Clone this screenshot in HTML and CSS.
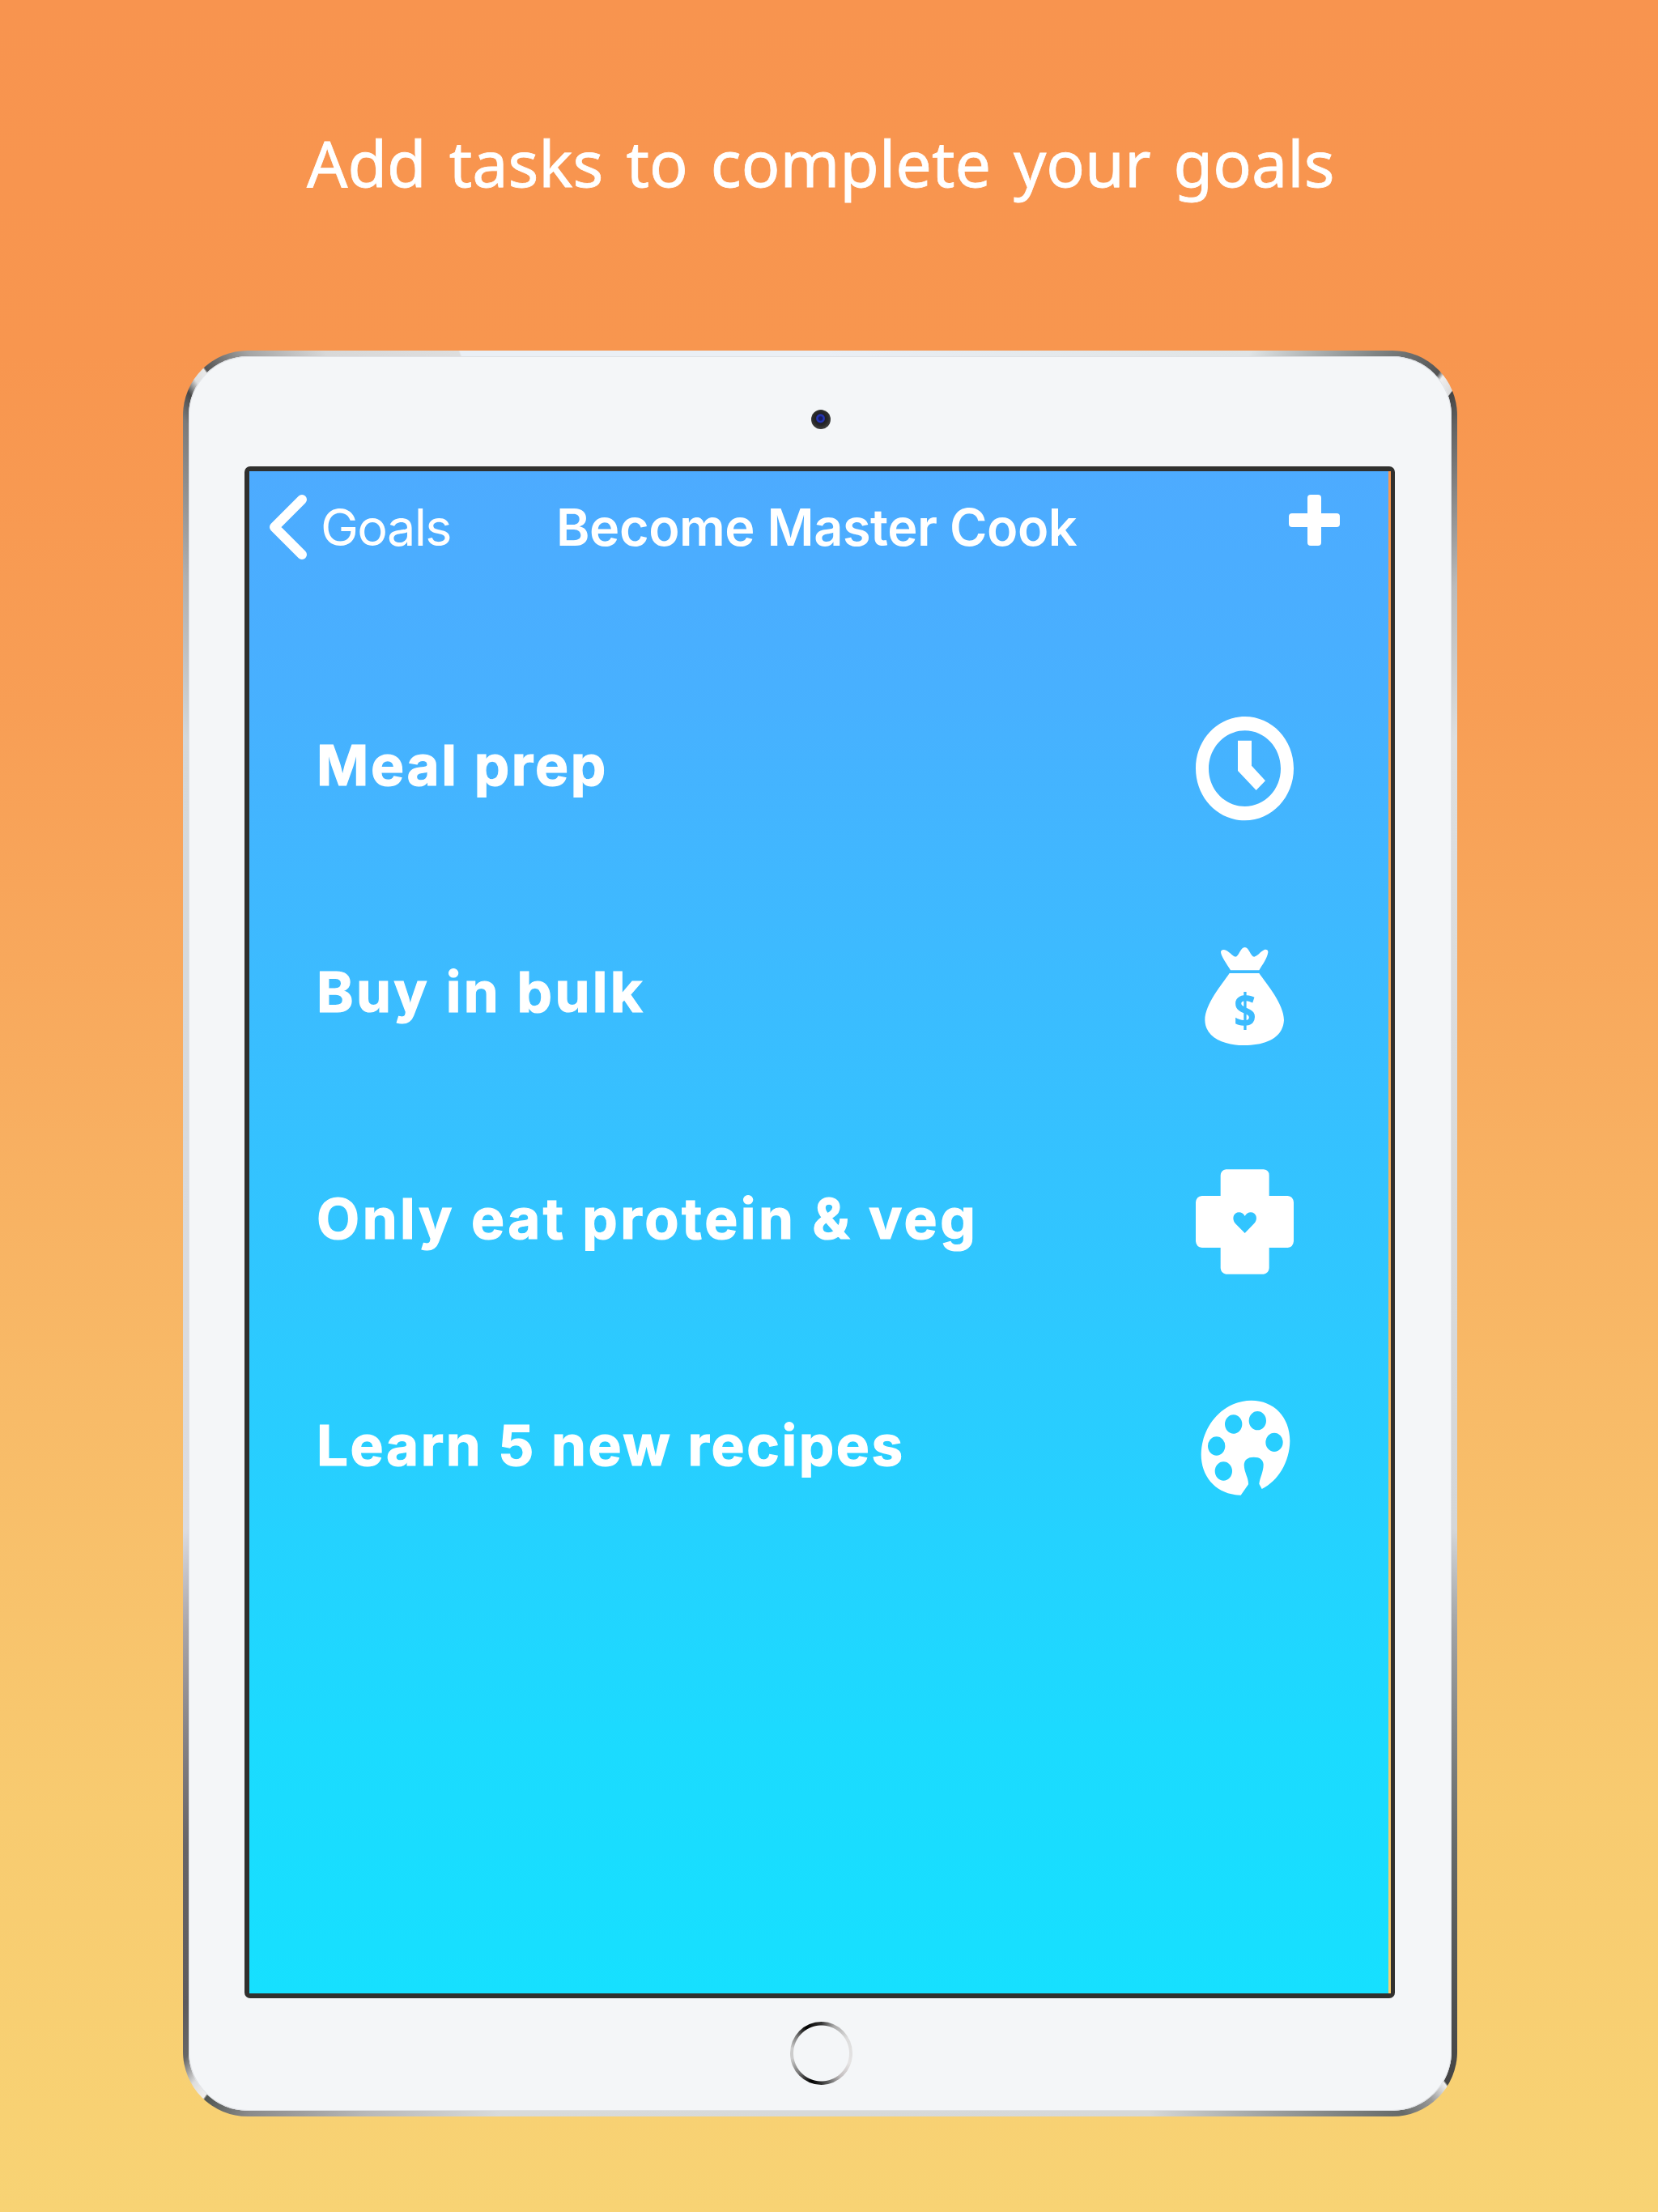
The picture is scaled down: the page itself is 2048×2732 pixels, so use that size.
FILE: index.html
```
<!DOCTYPE html>
<html lang="en">
<head>
<meta charset="utf-8">
<title>Goals</title>
<link rel="stylesheet" href="styles.css">
</head>
<body>
<main class="promo">
  <h1 class="headline">Add tasks to complete your goals</h1>
  <div class="device">
    <div class="face">
      <div class="top-bezel"><span class="camera"></span></div>
      <div class="bezel">
        <div class="screen">
          <header class="navbar">
            <a class="back">
              <svg class="chevron" viewBox="0 0 46 80"><path d="M40 6 6 40 40 74"/></svg>
              <span class="back-label">Goals</span>
            </a>
            <h2 class="title">Become Master Cook</h2>
            <svg class="plus" viewBox="0 0 63 63"><rect x="23" width="17" height="63" rx="4"/><rect y="23" width="63" height="17" rx="4"/></svg>
          </header>
          <ul class="tasks">
            <li class="task">
              <span class="task-name meal">Meal prep</span>
              <svg class="icon" viewBox="0 0 480 480"><path fill-rule="evenodd" d="M233 45C334 45 414 131 414 237S334 430 233 430 51 344 51 237 132 45 233 45ZM233 97C159 97 99 160 99 238S159 378 233 378 366 316 366 238 307 97 233 97Z"/><path d="M207 134H258V227L309 283 275 318 207 246Z"/></svg>
            </li>
            <li class="task">
              <span class="task-name bulk">Buy in bulk</span>
              <svg class="icon" viewBox="0 0 480 480"><path d="M180 145C166 121 144 92 144 77 145 68 155 67 165 72 179 80 187 92 198 95 211 95 216 60 233 60 249 60 254 95 268 95 280 93 291 76 304 70 313 66 320 71 319 79 315 103 299 123 286 145Z"/><path d="M176 156H286C314 197 378 270 378 330 374 397 309 423 231 423 154 423 87 395 85 330 85 270 149 197 176 156Z"/><text class="dollar" transform="translate(234 356) scale(.85 1)" text-anchor="middle">$</text></svg>
            </li>
            <li class="task">
              <span class="task-name protein">Only eat protein &amp; veg</span>
              <svg class="icon" viewBox="0 0 480 480"><path fill-rule="evenodd" d="M163 43H303Q323 45 323 65V141H392Q412 143 414 165V309Q412 331 392 333H323V409Q321 429 303 431H163Q145 429 143 409V333H74Q53 331 51 309V165Q53 143 74 141H143V65Q145 45 163 43ZM233 279 198 244C187 231 188 214 198 206 210 198 227 202 233 216 240 202 256 198 268 206 278 214 279 231 267 244Z"/></svg>
            </li>
            <li class="task">
              <span class="task-name recipes">Learn 5 new recipes</span>
              <svg class="icon" viewBox="0 0 480 480"><path fill-rule="evenodd" d="M218 410C130 409 71 345 71 259 72 155 151 60 257 59 341 59 400 121 400 209 399 287 356 357 296 387L286 368C289 342 302 325 302 296 301 279 289 269 266 269 243 269 231 279 230 298 231 328 247 346 246 370ZM223 147a32 35 0 1 0-64 0 32 35 0 1 0 64 0M312 134a32 35 0 1 0-64 0 32 35 0 1 0 64 0M160 228a32 35 0 1 0-64 0 32 35 0 1 0 64 0M374 214a32 35 0 1 0-64 0 32 35 0 1 0 64 0M186 321a32 35 0 1 0-64 0 32 35 0 1 0 64 0"/></svg>
            </li>
          </ul>
        </div>
      </div>
      <div class="chin"><span class="home"></span></div>
    </div>
  </div>
</main>
</body>
</html>
```
FILE: styles.css
```
* { box-sizing: border-box; }
body { margin: 0; }
.promo {
  width: 2048px;
  height: 2732px;
  overflow: hidden;
  background: linear-gradient(#f8944f 0%, #f8964f 16%, #f89e55 32%, #f8ac5f 48%, #f8bb68 64%, #f8cb70 82%, #f8d374 100%);
  color: #fff;
}
.headline {
  margin: 0;
  height: 433px;
  padding: 146px 0 0 379px;
  font: 400 79px/110px "Noto Sans", sans-serif;
  letter-spacing: 0;
  word-spacing: 7.5px;
  -webkit-text-stroke: .8px #fff;
  white-space: nowrap;
}
.device {
  width: 1574px;
  height: 2181px;
  margin-left: 226px;
  padding: 7px;
  border-radius: 80px;
  background: conic-gradient(
    #eaeff5 0deg, #e0e4e5 26deg, #808585 32.2deg, #555 35.7deg, #f0eeee 36deg, #dcdcdc 36.85deg,
    #444 36.9deg, #626262 38.1deg, #8c8c8c 41deg, #bababa 44.4deg, #dcdedf 52deg, #d4d6d8 115deg,
    #a0a2a4 122deg, #666a6a 134deg, #444 143.6deg, #eee 143.7deg, #999 144.8deg, #666a68 146.5deg, #d6d8d8 159.5deg,
    #d8dada 200deg, #b8b8b8 207.3deg, #8a8a8a 213deg, #505552 215.4deg, #f0eeee 215.5deg, #ddd 216.4deg,
    #666 217.6deg, #5c5a5e 219.5deg, #666468 226deg, #a8a4a8 238deg, #dcdce0 245deg,
    #d4d8da 308deg, #b0b0b0 315.9deg, #7a7a7a 322deg, #484848 323.1deg, #ddd 323.8deg, #e8e8e8 324.5deg,
    #555 324.6deg, #a4a4a4 327deg, #d8d8d8 330.7deg, #dedede 337.7deg, #eaeff5 337.8deg);
}
.face {
  display: flex;
  flex-direction: column;
  width: 100%;
  height: 100%;
  border-radius: 73px;
  background: #f4f6f8;
  box-shadow: inset 0 0 0 1px #dfe1e5;
}
.top-bezel { display: flex; justify-content: center; padding-top: 66px; height: 136px; }
.camera {
  width: 24px;
  height: 24px;
  margin-left: 2px;
  border-radius: 50%;
  background: radial-gradient(circle at 48% 45%, #181c60 0 2px, #2438c0 4px, #26309c 5px, #202026 6px, #292929 9px, #3b3b3b 12px);
}
.bezel {
  width: 1421px;
  height: 1892px;
  margin-left: 69px;
  padding: 6px 5px 6px 6px;
  border-radius: 7px;
  background: #30302e;
}
.screen {
  height: 100%;
  padding-right: 3px;
  background:
    linear-gradient(#f9974f, #f8cf72) right / 3px 100% no-repeat,
    linear-gradient(#4dabff, #48b0ff 14%, #31c5ff 50%, #1bdbff 84%, #16e0ff);
}
.navbar { display: flex; align-items: flex-start; height: 228px; padding-left: 25px; }
.back { display: flex; align-items: flex-start; width: 356px; }
.chevron { width: 46px; height: 80px; margin-top: 29px; fill: none; stroke: #fff; stroke-width: 12; stroke-linecap: round; stroke-linejoin: round; }
.back-label { margin: 29px 0 0 17px; font: 400 63px/80px Inter, sans-serif; letter-spacing: -1.7px; }
.title { margin: 29px 0 0 -2px; width: 905px; font: 600 63px/80px Inter, sans-serif; letter-spacing: -.45px; white-space: nowrap; }
.plus { width: 63px; height: 63px; margin-top: 29px; fill: #fff; }
.tasks { margin: 0; padding: 0 95px 0 83px; list-style: none; }
.task { display: flex; align-items: center; justify-content: space-between; height: 280px; }
.task-name { padding-bottom: 10px; font: 700 69px/80px Inter, sans-serif; -webkit-text-stroke: 1.2px #fff; white-space: nowrap; }
.meal { letter-spacing: 2.7px; }
.bulk { letter-spacing: 3.3px; }
.protein { letter-spacing: 3.5px; }
.recipes { letter-spacing: 2.6px; }
.icon { width: 160px; height: 160px; fill: #fff; }
.dollar { font: 700 172px "Open Sans", sans-serif; fill: #3dbcff; }
.chin { display: flex; justify-content: center; padding-top: 29px; }
.home {
  width: 77px;
  height: 78px;
  margin-left: 3px;
  border-radius: 50%;
  background:
    radial-gradient(circle, #f4f6f8 0 34px, transparent 35px),
    conic-gradient(#333 0deg, #aaa 25deg, #ddd 60deg, #e5e3e3 110deg, #c4bfc0 140deg, #777 160deg, #222 185deg, #000 200deg, #777 230deg, #ccc 260deg, #ccc 280deg, #777 305deg, #000 330deg, #333 360deg);
}
```
